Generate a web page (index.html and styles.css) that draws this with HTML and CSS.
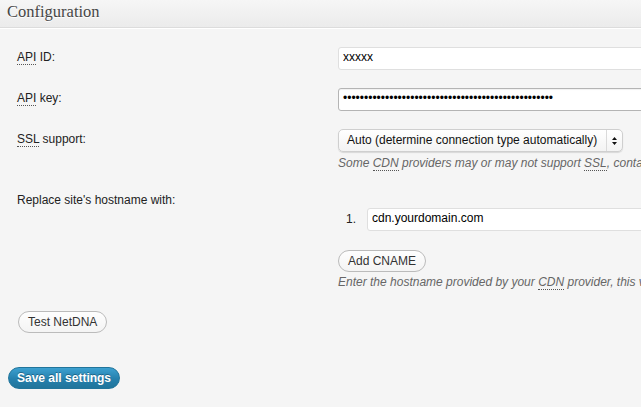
FILE: index.html
```html
<!DOCTYPE html>
<html>
<head>
<meta charset="utf-8">
<title>Configuration</title>
<link rel="stylesheet" href="styles.css">
</head>
<body>
<div class="postbox">
  <h3 class="hndle">Configuration</h3>
  <div class="inside">
    <div class="form-table">
      <div class="row">
        <label class="th" for="api_id"><abbr title="Application Programming Interface">API</abbr> ID:</label>
        <div class="td"><input id="api_id" class="text" type="text" value="xxxxx"></div>
      </div>
      <div class="row">
        <label class="th" for="api_key"><abbr title="Application Programming Interface">API</abbr> key:</label>
        <div class="td"><input id="api_key" class="text focus" type="password" value="xxxxxxxxxxxxxxxxxxxxxxxxxxxxxxxxxxxxxxxxxxxxxxxxxx"></div>
      </div>
      <div class="row">
        <label class="th"><abbr title="Secure Sockets Layer">SSL</abbr> support:</label>
        <div class="td">
          <div class="select">
            <span class="select-value">Auto (determine connection type automatically)</span>
            <span class="select-arrows">
              <svg width="5" height="8" viewBox="0 0 5 8"><path d="M2.5 0 L5 3 L0 3 Z M0 5 L5 5 L2.5 8 Z" fill="#111"/></svg>
            </span>
          </div>
          <p class="description">Some <abbr title="Content Delivery Network">CDN</abbr> providers may or may not support <abbr title="Secure Sockets Layer">SSL</abbr>, contact your vendor for more information.</p>
        </div>
      </div>
      <div class="row row-cname">
        <label class="th">Replace site's hostname with:</label>
        <div class="td td-cname">
          <div class="cname">
            <span class="num">1.</span>
            <input class="text" type="text" value="cdn.yourdomain.com">
          </div>
          <button class="button btn-add" type="button">Add CNAME</button>
          <p class="description">Enter the hostname provided by your <abbr title="Content Delivery Network">CDN</abbr> provider, this value will replace your site's hostname in the HTML.</p>
        </div>
      </div>
    </div>
    <div class="test-row"><button class="button" type="button">Test NetDNA</button></div>
    <div class="save-row"><button class="button-primary" type="button">Save all settings</button></div>
  </div>
</div>
</body>
</html>
```
FILE: styles.css
```css
html, body {
  margin: 0;
  padding: 0;
  height: 100%;
}

body {
  background: #f5f5f5;
  font-family: "Liberation Sans", Arial, Helvetica, sans-serif;
  font-size: 12px;
  color: #222;
  overflow: hidden;
}

.hndle {
  margin: 0;
  height: 27px;
  padding-left: 7px;
  border-bottom: 1px solid #dcdcdc;
  box-shadow: 0 1px 0 #fff;
  background: linear-gradient(#f6f6f6, #ebebeb);
  font-family: "Liberation Serif", Georgia, serif;
  font-weight: normal;
  font-size: 16.5px;
  line-height: 24px;
  color: #464646;
  text-shadow: 0 1px 0 #fff;
}

.inside {
  padding-top: 19px;
}

abbr {
  text-decoration: none;
  border-bottom: 1px dotted #555;
}

.row {
  display: flex;
  align-items: flex-start;
  margin-bottom: 18px;
}

.row-cname {
  padding-top: 1px;
  margin-bottom: 0;
}

.th {
  flex: none;
  box-sizing: border-box;
  width: 338px;
  padding-left: 17px;
  padding-top: 2px;
  line-height: 16px;
  color: #222;
}

.td {
  flex: none;
}

.text {
  box-sizing: border-box;
  width: 320px;
  height: 23px;
  margin: 0;
  padding: 0 5px 3px 4px;
  border: 1px solid #dfdfdf;
  border-radius: 3px;
  background: #fff;
  font-family: "Liberation Sans", Arial, sans-serif;
  font-size: 12px;
  color: #000;
  outline: none;
}

.text.focus {
  border-color: #b4b4b4;
  box-shadow: inset 0 1px 1px rgba(0, 0, 0, 0.06);
}

.select {
  box-sizing: border-box;
  display: flex;
  align-items: stretch;
  width: 285px;
  height: 23px;
  border: 1px solid #cfcfcf;
  border-radius: 5px;
  background: linear-gradient(#ffffff, #f3f3f3);
  box-shadow: 0 1px 1px rgba(0, 0, 0, 0.12);
  color: #111;
}

.select-value {
  flex: 1;
  padding-left: 8px;
  line-height: 20px;
  white-space: nowrap;
}

.select-arrows {
  flex: none;
  width: 15px;
  border-left: 1px solid #dadada;
  display: flex;
  align-items: center;
  justify-content: center;
}

.select-arrows svg {
  display: block;
}

.description {
  margin: 3px 0 0;
  line-height: 16px;
  font-style: italic;
  color: #666;
  white-space: nowrap;
}

.td-cname {
  padding-top: 18px;
}

.cname {
  display: flex;
  align-items: center;
}

.num {
  box-sizing: border-box;
  width: 29px;
  padding-left: 8px;
  padding-bottom: 2px;
  color: #222;
}

.button {
  display: inline-block;
  box-sizing: border-box;
  height: 22px;
  margin: 0;
  padding: 0 9px;
  border: 1px solid #bbb;
  border-radius: 11px;
  background: linear-gradient(#fefefe, #f4f4f4);
  font-family: "Liberation Sans", Arial, sans-serif;
  font-size: 12px;
  line-height: 20px;
  color: #333;
  cursor: pointer;
}

.btn-add {
  margin-top: 19px;
  display: block;
}

.btn-add + .description {
  margin-top: 2px;
}

.test-row {
  margin-top: 21px;
  padding-left: 18px;
}

.save-row {
  margin-top: 34px;
  padding-left: 8px;
}

.button-primary {
  box-sizing: border-box;
  height: 22px;
  margin: 0;
  padding: 0 8px;
  border: 1px solid #21759b;
  border-radius: 11px;
  background: linear-gradient(#3ca0d0, #2580ad 55%, #21759b);
  font-family: "Liberation Sans", Arial, sans-serif;
  font-size: 12px;
  font-weight: bold;
  line-height: 20px;
  color: #fff;
  text-shadow: 0 -1px 0 rgba(0, 0, 0, 0.3);
  cursor: pointer;
}
```
